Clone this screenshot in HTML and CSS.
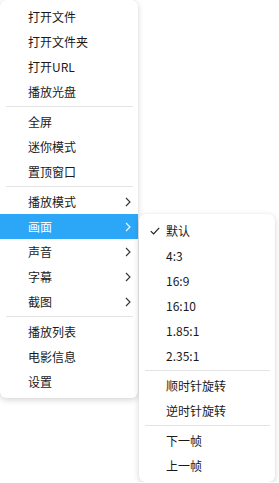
FILE: index.html
```html
<!DOCTYPE html>
<html lang="zh">
<head>
<meta charset="utf-8">
<link rel="stylesheet" href="styles.css">
</head>
<body>
<div class="stage">
  <div class="menu main">
    <div class="item">打开文件</div>
    <div class="item">打开文件夹</div>
    <div class="item">打开URL</div>
    <div class="item">播放光盘</div>
    <div class="sep"></div>
    <div class="item">全屏</div>
    <div class="item">迷你模式</div>
    <div class="item">置顶窗口</div>
    <div class="sep"></div>
    <div class="item sub">播放模式<svg class="arrow" viewBox="0 0 6 10"><path d="M1 1 L5 5 L1 9"/></svg></div>
    <div class="item sub active">画面<svg class="arrow" viewBox="0 0 6 10"><path d="M1 1 L5 5 L1 9"/></svg></div>
    <div class="item sub">声音<svg class="arrow" viewBox="0 0 6 10"><path d="M1 1 L5 5 L1 9"/></svg></div>
    <div class="item sub">字幕<svg class="arrow" viewBox="0 0 6 10"><path d="M1 1 L5 5 L1 9"/></svg></div>
    <div class="item sub">截图<svg class="arrow" viewBox="0 0 6 10"><path d="M1 1 L5 5 L1 9"/></svg></div>
    <div class="sep"></div>
    <div class="item">播放列表</div>
    <div class="item">电影信息</div>
    <div class="item">设置</div>
  </div>
  <div class="menu submenu">
    <div class="item checked"><svg class="check" viewBox="0 0 10 8"><path d="M0.8 4.2 L3.6 7 L9.2 0.8"/></svg>默认</div>
    <div class="item">4:3</div>
    <div class="item">16:9</div>
    <div class="item">16:10</div>
    <div class="item">1.85:1</div>
    <div class="item">2.35:1</div>
    <div class="sep"></div>
    <div class="item">顺时针旋转</div>
    <div class="item">逆时针旋转</div>
    <div class="sep"></div>
    <div class="item">下一帧</div>
    <div class="item">上一帧</div>
  </div>
</div>
</body>
</html>
```
FILE: styles.css
```css
html, body {
  margin: 0;
  padding: 0;
  background: #ffffff;
}
body {
  font-family: "Noto Sans CJK SC", "Noto Sans", sans-serif;
  font-size: 12px;
  color: #1a1a1a;
}
.stage {
  display: flex;
  align-items: flex-start;
}
.menu {
  background: #ffffff;
  border-radius: 6px;
  box-shadow: 0 2px 6px rgba(0, 0, 0, 0.16), 0 0 1px rgba(0, 0, 0, 0.12);
  padding: 4px 0;
  box-sizing: border-box;
}
.main {
  width: 138px;
  position: relative;
  z-index: 1;
}
.submenu {
  width: 136px;
  margin-left: 1px;
  margin-top: 214px;
  position: relative;
  z-index: 2;
}
.item {
  height: 25px;
  line-height: 25px;
  padding-left: 28px;
  display: flex;
  align-items: center;
  position: relative;
  white-space: nowrap;
}
.submenu .item {
  padding-left: 27px;
}
.item.active {
  background: #2ca7f8;
  color: #ffffff;
}
.sep {
  height: 5px;
  display: flex;
  align-items: center;
  padding: 0 5px 0 6px;
}
.sep::before {
  content: "";
  display: block;
  flex: 1;
  height: 1px;
  background: #e4e4e4;
}
.arrow {
  position: absolute;
  right: 7px;
  top: 8px;
  width: 6px;
  height: 10px;
  fill: none;
  stroke: #333;
  stroke-width: 1.1;
}
.active .arrow {
  stroke: #ffffff;
}
.check {
  position: absolute;
  left: 11px;
  top: 9px;
  width: 10px;
  height: 8px;
  fill: none;
  stroke: #222;
  stroke-width: 1.2;
}
```
